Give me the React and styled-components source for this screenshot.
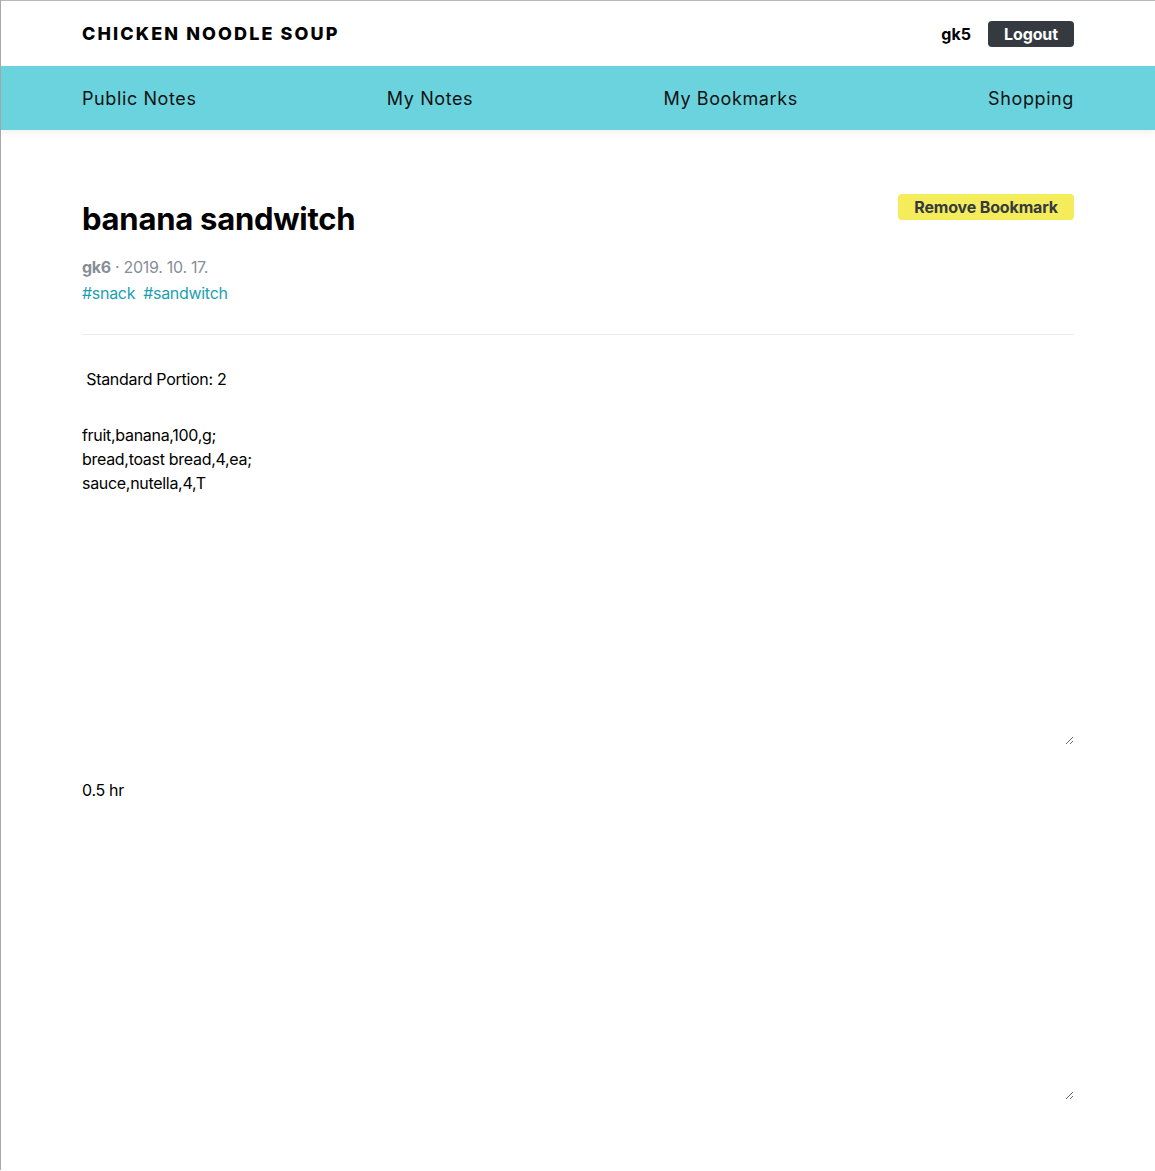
import React from 'react'
import styled, { createGlobalStyle } from 'styled-components'

const GlobalStyle = createGlobalStyle`
  body {
    margin: 0;
    font-family: Inter, "Noto Sans", "Liberation Sans", sans-serif;
    color: #000;
    background: #fff;
  }
`

const menu = ['Public Notes', 'My Notes', 'My Bookmarks', 'Shopping']
const note = {
  title: 'banana sandwitch',
  author: 'gk6',
  date: '2019. 10. 17.',
  tags: ['snack', 'sandwitch'],
  portion: 2,
  ingredients: 'fruit,banana,100,g;\nbread,toast bread,4,ea;\nsauce,nutella,4,T',
  time: '0.5 hr',
}

export default function App() {
  return (
    <Frame>
      <GlobalStyle />
      <Header>
        <Inner>
          <Logo>CHICKEN NOODLE SOUP</Logo>
          <UserBox>
            <UserName>gk5</UserName>
            <DarkButton>Logout</DarkButton>
          </UserBox>
        </Inner>
      </Header>
      <Nav>
        <Inner>
          {menu.map((item) => (
            <NavItem key={item}>{item}</NavItem>
          ))}
        </Inner>
      </Nav>
      <Content>
        <TitleRow>
          <Title>{note.title}</Title>
          <YellowButton>Remove Bookmark</YellowButton>
        </TitleRow>
        <Meta>
          <b>{note.author}</b> · {note.date}
        </Meta>
        <Tags>
          {note.tags.map((tag) => (
            <Tag key={tag}>#{tag}</Tag>
          ))}
        </Tags>
        <Divider />
        <Portion>&nbsp;Standard Portion: {note.portion}</Portion>
        <Body readOnly value={note.ingredients} />
        <Body readOnly value={note.time} $gap />
      </Content>
    </Frame>
  )
}

const Frame = styled.div`
  min-height: 1170px;
  border-top: 1px solid #b9b9b9;
  border-left: 1px solid #a8a8a8;
  box-sizing: border-box;
`

const Inner = styled.div`
  width: 992px;
  margin: 0 auto;
  display: flex;
  align-items: center;
  justify-content: space-between;
  height: 100%;
`

const Header = styled.header`
  height: 65px;
`

const Logo = styled.div`
  font-size: 18px;
  font-weight: 800;
  letter-spacing: 2.1px;
`

const UserBox = styled.div`
  display: flex;
  align-items: center;
  gap: 17px;
`

const UserName = styled.span`
  font-weight: 700;
  font-size: 16px;
`

const DarkButton = styled.button`
  background: #343a40;
  color: #fff;
  border: none;
  border-radius: 4px;
  height: 26px;
  padding: 0 16px;
  font-family: inherit;
  font-size: 16px;
  font-weight: 700;
  letter-spacing: -0.1px;
`

const Nav = styled.nav`
  height: 64px;
  background: #6bd3de;
  box-shadow: 0 3px 6px rgba(0, 0, 0, 0.06);
`

const NavItem = styled.span`
  font-size: 18px;
  letter-spacing: 0.6px;
  color: #111;
`

const Content = styled.main`
  width: 992px;
  margin: 0 auto;
  padding-top: 64px;
  font-size: 16px;
  line-height: 24px;
  letter-spacing: -0.3px;
`

const TitleRow = styled.div`
  display: flex;
  justify-content: space-between;
  align-items: flex-start;
`

const Title = styled.h1`
  margin: 0;
  font-size: 31px;
  line-height: 50px;
  font-weight: 700;
  letter-spacing: -0.25px;
`

const YellowButton = styled.button`
  background: #f4ec5a;
  color: #343a40;
  border: none;
  border-radius: 4px;
  height: 26px;
  padding: 0 16px;
  font-family: inherit;
  font-size: 16px;
  font-weight: 700;
  letter-spacing: -0.15px;
`

const Meta = styled.div`
  margin-top: 11px;
  color: #868e96;
`

const Tags = styled.div`
  display: flex;
  gap: 8px;
  margin-top: 2px;
`

const Tag = styled.span`
  color: #1c9fb0;
`

const Divider = styled.hr`
  margin: 29px 0 0;
  border: none;
  border-top: 1px solid #e9ecef;
`

const Portion = styled.div`
  margin-top: 32px;
`

const Body = styled.textarea`
  display: block;
  width: 100%;
  box-sizing: border-box;
  height: 322px;
  margin-top: ${(props) => (props.$gap ? '33px' : '32px')};
  padding: 0;
  border: none;
  outline: none;
  font-family: inherit;
  font-size: 16px;
  line-height: 24px;
  letter-spacing: -0.3px;
  color: #000;
  background: transparent;
`
